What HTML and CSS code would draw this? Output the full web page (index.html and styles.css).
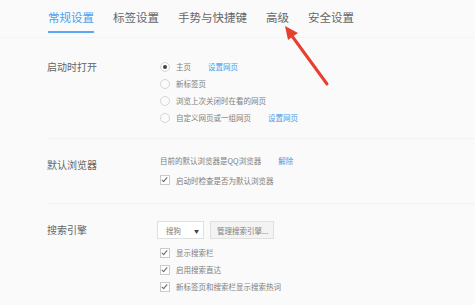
FILE: index.html
```html
<!DOCTYPE html>
<html lang="zh-CN">
<head>
    <meta charset="UTF-8">
    <title>设置</title>
    <link rel="stylesheet" href="styles.css">
</head>
<body>

    <div class="tabs">
        <div class="tab active">常规设置</div>
        <div class="tab">标签设置</div>
        <div class="tab">手势与快捷键</div>
        <div class="tab">高级</div>
        <div class="tab">安全设置</div>
    </div>

    <div class="section startup">
        <div class="label">启动时打开</div>
        <div class="options">
            <div class="row"><span class="radio checked"></span>主页<a class="link">设置网页</a></div>
            <div class="row"><span class="radio"></span>新标签页</div>
            <div class="row"><span class="radio"></span>浏览上次关闭时在看的网页</div>
            <div class="row"><span class="radio"></span>自定义网页或一组网页<a class="link">设置网页</a></div>
        </div>
    </div>

    <div class="section browser">
        <div class="label">默认浏览器</div>
        <div class="options">
            <div class="row">目前的默认浏览器是QQ浏览器<a class="link">解除</a></div>
            <div class="row"><span class="check"></span>启动时检查是否为默认浏览器</div>
        </div>
    </div>

    <div class="section search">
        <div class="label">搜索引擎</div>
        <div class="options">
            <div class="controls">
                <div class="select">搜狗<span class="caret">▼</span></div>
                <div class="button">管理搜索引擎...</div>
            </div>
            <div class="row"><span class="check"></span>显示搜索栏</div>
            <div class="row"><span class="check"></span>启用搜索直达</div>
            <div class="row"><span class="check"></span>新标签页和搜索栏显示搜索热词</div>
        </div>
    </div>

    <!-- 红色箭头标注 -->
    <svg class="arrow" width="475" height="305" viewBox="0 0 475 305">
        <line x1="327" y1="84" x2="292" y2="36" stroke="#e8402f" stroke-width="3" stroke-linecap="round"/>
        <polygon points="285,26 298,33 288,40" fill="#e8402f"/>
    </svg>

</body>
</html>
```

FILE: styles.css
```css
body {
    font-family: "Noto Sans CJK SC", "Liberation Sans", sans-serif;
    background-color: #fafafa;
    color: #666;
    margin: 0;
    padding: 0;
    width: 475px;
    height: 305px;
    overflow: hidden;
    position: relative;
}

.tabs {
    display: flex;
    gap: 19px;
    padding-left: 48px;
    height: 38px;
    border-bottom: 1px solid #f4f4f4;
    box-sizing: border-box;
}

.tab {
    font-size: 11.5px;
    line-height: 14px;
    padding-top: 10px;
    height: 23px;
    color: #666;
    box-sizing: border-box;
}

.tab.active {
    color: #4a9ff0;
    border-bottom: 2px solid #5aa8f2;
    height: 33px;
}

.section {
    display: flex;
    margin-left: 47px;
    border-bottom: 1px solid #f2f2f2;
}

.label {
    width: 113px;
    flex-shrink: 0;
    font-size: 10px;
    color: #666;
    line-height: 17px;
}

.options {
    font-size: 7.5px;
    color: #808080;
}

.row {
    display: flex;
    align-items: center;
    height: 17px;
}

.link {
    color: #4a97e8;
    margin-left: 17px;
}

.radio {
    width: 8px;
    height: 8px;
    border: 1px solid #d6d6d6;
    border-radius: 50%;
    background-color: #fbfbfb;
    margin-right: 6px;
    display: flex;
    align-items: center;
    justify-content: center;
}

.radio.checked::after {
    content: "";
    width: 4px;
    height: 4px;
    border-radius: 50%;
    background-color: #444;
}

.check {
    width: 8px;
    height: 8px;
    border: 1px solid #cbcbcb;
    background-color: #fff;
    margin-right: 6px;
    position: relative;
}

.check::after {
    content: "";
    position: absolute;
    left: 2px;
    top: 0px;
    width: 2px;
    height: 5px;
    border-right: 1.5px solid #666;
    border-bottom: 1.5px solid #666;
    transform: rotate(40deg);
}

.startup {
    padding-top: 20px;
    padding-bottom: 12px;
}

.browser {
    padding-top: 11px;
    padding-bottom: 13px;
}

.browser .row {
    height: 20px;
}

.browser .label {
    padding-top: 6px;
}

.search {
    border-bottom: none;
    padding-top: 17px;
}

.search .label {
    line-height: 18px;
}

.controls {
    display: flex;
    gap: 6px;
    margin-left: -3px;
    margin-bottom: 5px;
}

.select {
    width: 47px;
    height: 18px;
    border: 1px solid #e0e0e0;
    background-color: #fff;
    box-sizing: border-box;
    display: flex;
    align-items: center;
    padding-left: 8px;
}

.caret {
    margin-left: auto;
    margin-right: 4px;
    font-size: 5px;
    color: #444;
}

.button {
    width: 64px;
    height: 18px;
    border: 1px solid #e0e0e0;
    background-color: #f3f3f3;
    box-sizing: border-box;
    display: flex;
    align-items: center;
    padding-left: 6px;
}

.arrow {
    position: absolute;
    left: 0;
    top: 0;
    pointer-events: none;
}
```
